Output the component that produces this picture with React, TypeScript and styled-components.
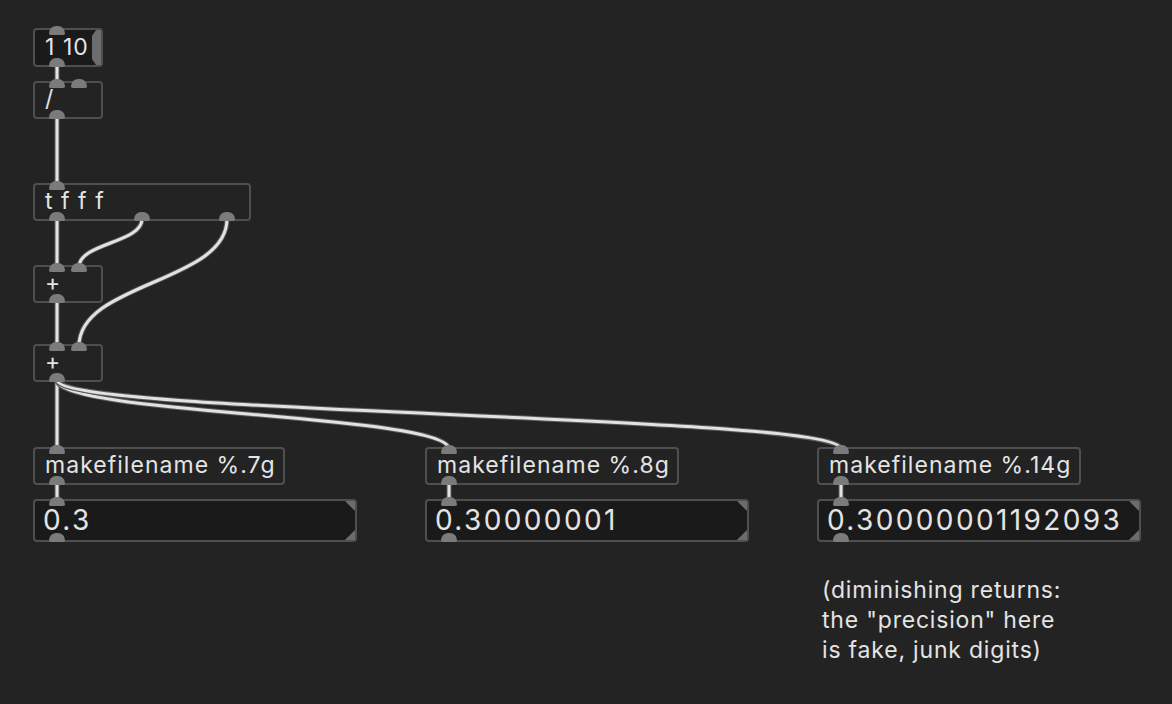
import React from "react";
import styled, { createGlobalStyle } from "styled-components";

// Types
type Kind = "object" | "message" | "atom";

interface INode {
    id: string;
    kind: Kind;
    x: number;
    y: number;
    w: number;
    h: number;
    text: string;
    ins: number;
    outs: number;
}

interface IWire {
    from: [string, number];
    to: [string, number];
}

// Patch contents
const nodes: INode[] = [
    { id: "msg", kind: "message", x: 33, y: 28, w: 70, h: 39, text: "1 10", ins: 1, outs: 1 },
    { id: "div", kind: "object", x: 33, y: 81, w: 70, h: 38, text: "/", ins: 2, outs: 1 },
    { id: "trig", kind: "object", x: 33, y: 183, w: 218, h: 38, text: "t f f f", ins: 1, outs: 3 },
    { id: "add1", kind: "object", x: 33, y: 265, w: 70, h: 38, text: "+", ins: 2, outs: 1 },
    { id: "add2", kind: "object", x: 33, y: 344, w: 70, h: 38, text: "+", ins: 2, outs: 1 },
    { id: "mf7", kind: "object", x: 33, y: 447, w: 252, h: 38, text: "makefilename %.7g", ins: 1, outs: 1 },
    { id: "mf8", kind: "object", x: 425, y: 447, w: 254, h: 38, text: "makefilename %.8g", ins: 1, outs: 1 },
    { id: "mf14", kind: "object", x: 817, y: 447, w: 264, h: 38, text: "makefilename %.14g", ins: 1, outs: 1 },
    { id: "sym7", kind: "atom", x: 33, y: 499, w: 324, h: 43, text: "0.3", ins: 1, outs: 1 },
    { id: "sym8", kind: "atom", x: 425, y: 499, w: 324, h: 43, text: "0.30000001", ins: 1, outs: 1 },
    { id: "sym14", kind: "atom", x: 817, y: 499, w: 324, h: 43, text: "0.30000001192093", ins: 1, outs: 1 },
];

const wires: IWire[] = [
    { from: ["msg", 0], to: ["div", 0] },
    { from: ["div", 0], to: ["trig", 0] },
    { from: ["trig", 0], to: ["add1", 0] },
    { from: ["trig", 1], to: ["add1", 1] },
    { from: ["trig", 2], to: ["add2", 1] },
    { from: ["add1", 0], to: ["add2", 0] },
    { from: ["add2", 0], to: ["mf7", 0] },
    { from: ["add2", 0], to: ["mf8", 0] },
    { from: ["add2", 0], to: ["mf14", 0] },
    { from: ["mf7", 0], to: ["sym7", 0] },
    { from: ["mf8", 0], to: ["sym8", 0] },
    { from: ["mf14", 0], to: ["sym14", 0] },
];

const PORT_W = 16;
const PORT_INSET = 16;

// left edge of port i out of n, relative to the box
function portLeft(w: number, n: number, i: number) {
    if (n <= 1) return PORT_INSET;
    const span = w - PORT_INSET * 2 - PORT_W;
    return PORT_INSET + (span * i) / (n - 1);
}

function wirePath(w: IWire) {
    const a = nodes.find((n) => n.id === w.from[0])!;
    const b = nodes.find((n) => n.id === w.to[0])!;
    const x1 = a.x + portLeft(a.w, a.outs, w.from[1]) + PORT_W / 2;
    const y1 = a.y + a.h - 2;
    const x2 = b.x + portLeft(b.w, b.ins, w.to[1]) + PORT_W / 2;
    const y2 = b.y + 2;
    const k = Math.max(8, (y2 - y1) * 0.5);
    return `M${x1} ${y1} C${x1} ${y1 + k} ${x2} ${y2 - k} ${x2} ${y2}`;
}

// Styles
const GlobalStyle = createGlobalStyle`
    html, body {
        margin: 0;
        padding: 0;
        background: #232323;
    }
    body {
        font-family: Inter, "Noto Sans", sans-serif;
        color: #e4e4e4;
    }
`;

const Canvas = styled.div`
    position: relative;
    width: 1172px;
    height: 704px;
    overflow: hidden;
    background: #232323;
`;

const WireLayer = styled.svg`
    position: absolute;
    left: 0;
    top: 0;
    width: 1172px;
    height: 704px;
`;

const Box = styled.div<{ $x: number; $y: number; $w: number; $h: number; $kind: Kind }>`
    position: absolute;
    left: ${(p) => p.$x}px;
    top: ${(p) => p.$y}px;
    width: ${(p) => p.$w}px;
    height: ${(p) => p.$h}px;
    box-sizing: border-box;
    border: 2px solid #4f4f4f;
    border-radius: 4px;
    background: ${(p) => (p.$kind === "object" ? "#232323" : "#1a1a1a")};
    display: flex;
    align-items: center;
    padding-left: ${(p) => (p.$kind === "atom" ? 8 : 10)}px;
    font-size: ${(p) => (p.$kind === "atom" ? 28 : 23)}px;
    letter-spacing: ${(p) => (p.$kind === "atom" ? "0.085em" : "0.045em")};
    white-space: nowrap;
`;

const Label = styled.span`
    position: relative;
    top: -1px;
`;

const Port = styled.div<{ $left: number; $side: "in" | "out" }>`
    position: absolute;
    left: ${(p) => p.$left - 2}px;
    ${(p) => (p.$side === "in" ? "top: -4px;" : "bottom: -2px;")}
    width: ${PORT_W}px;
    height: 9px;
    border-radius: 8px 8px 2px 2px;
    background: #7b7b7b;
`;

const Flag = styled.svg`
    position: absolute;
    right: -2px;
    top: -2px;
`;

const Comment = styled.div`
    position: absolute;
    left: 822px;
    top: 575px;
    width: 280px;
    font-size: 23px;
    line-height: 30px;
    letter-spacing: 0.035em;
`;

function MessageFlag({ h }: { h: number }) {
    return (
        <Flag width={12} height={h} viewBox={`0 0 12 ${h}`}>
            <polygon
                points={`5,2 10,2 10,${h - 2} 5,${h - 2} 1,${h - 8} 1,8`}
                fill="#6c6c6c"
            />
        </Flag>
    );
}

function AtomCorners({ h }: { h: number }) {
    return (
        <Flag width={12} height={h} viewBox={`0 0 12 ${h}`}>
            <polygon points="0,2 10,2 10,12" fill="#6c6c6c" />
            <polygon points={`0,${h - 2} 10,${h - 2} 10,${h - 12}`} fill="#6c6c6c" />
        </Flag>
    );
}

function PatchBox({ node }: { node: INode }) {
    const ins = Array.from({ length: node.ins }, (_, i) => portLeft(node.w, node.ins, i));
    const outs = Array.from({ length: node.outs }, (_, i) => portLeft(node.w, node.outs, i));
    return (
        <Box $x={node.x} $y={node.y} $w={node.w} $h={node.h} $kind={node.kind}>
            <Label>{node.text}</Label>
            {node.kind === "message" && <MessageFlag h={node.h} />}
            {node.kind === "atom" && <AtomCorners h={node.h} />}
            {ins.map((l, i) => (
                <Port key={"i" + i} $left={l} $side="in" />
            ))}
            {outs.map((l, i) => (
                <Port key={"o" + i} $left={l} $side="out" />
            ))}
        </Box>
    );
}

function App() {
    return (
        <Canvas>
            <GlobalStyle />
            <WireLayer viewBox="0 0 1172 704">
                {wires.map((w, i) => (
                    <g key={i} fill="none" strokeLinecap="round">
                        <path d={wirePath(w)} stroke="#5a5a5a" strokeWidth={5} />
                        <path d={wirePath(w)} stroke="#e2e2e2" strokeWidth={3} />
                    </g>
                ))}
            </WireLayer>
            {nodes.map((n) => (
                <PatchBox key={n.id} node={n} />
            ))}
            <Comment>
                (diminishing returns:
                <br />
                the "precision" here
                <br />
                is fake, junk digits)
            </Comment>
        </Canvas>
    );
}

export default App;
